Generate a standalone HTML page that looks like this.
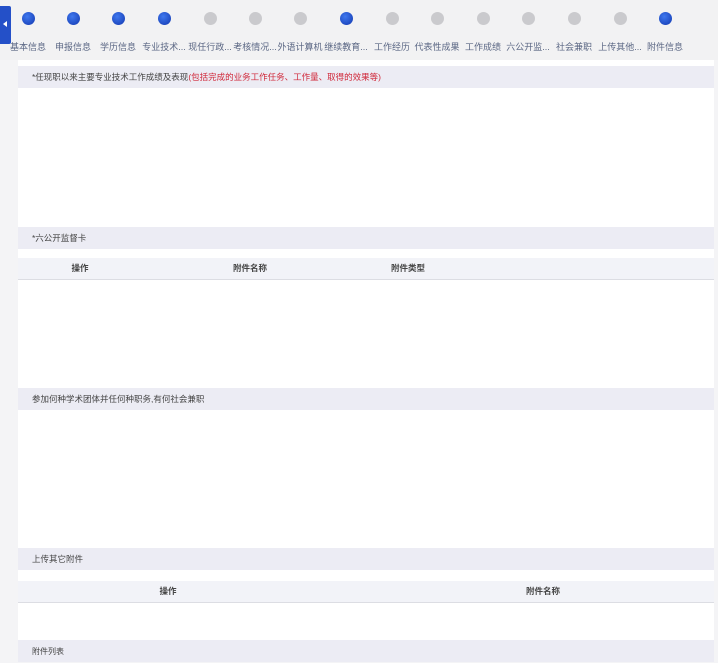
<!DOCTYPE html>
<html><head><meta charset="utf-8"><style>
body{margin:0;width:718px;height:653px;overflow:hidden;background:#f4f4f6;font-family:"Liberation Sans","Noto Sans CJK SC",sans-serif;position:relative}
.a{position:absolute}
.dot{position:absolute;top:12px;width:13px;height:13px;border-radius:50%}
.b{background:radial-gradient(circle at 40% 35%,#3f78ee,#1238b0)}
.g{background:#cacacd}
.lb{position:absolute;top:40px;font-size:9px;color:#5b6784;white-space:nowrap;transform:translateX(-50%)}
.panel{position:absolute;left:18px;top:60px;width:696px;height:593px;background:#fff}
.hd{position:absolute;left:18px;width:696px;height:22px;background:#ececf4;font-size:8.5px;color:#444;line-height:22px}
.hd span{padding-left:14px}
.th{position:absolute;left:18px;width:696px;height:21px;background:#f2f3f8;border-bottom:1px solid #dcdde3;font-size:8.5px;color:#444;font-weight:bold;line-height:21px}
.th i{position:absolute;font-style:normal;transform:translateX(-50%)}
</style></head><body>
<div class="a" style="left:0;top:0;width:718px;height:60px;background:#f2f2f3"></div>
<div class="a" style="left:0;top:6px;width:11px;height:38px;background:#2450c8;border-radius:0 2px 2px 0"></div>
<div class="a" style="left:3px;top:21px;width:0;height:0;border-right:4px solid #fff;border-top:3px solid transparent;border-bottom:3px solid transparent"></div>
<div class="dot b" style="left:22px"></div><div class="lb" style="left:28px">基本信息</div>
<div class="dot b" style="left:67px"></div><div class="lb" style="left:73px">申报信息</div>
<div class="dot b" style="left:112px"></div><div class="lb" style="left:118px">学历信息</div>
<div class="dot b" style="left:158px"></div><div class="lb" style="left:164px">专业技术...</div>
<div class="dot g" style="left:204px"></div><div class="lb" style="left:210px">现任行政...</div>
<div class="dot g" style="left:249px"></div><div class="lb" style="left:255px">考核情况...</div>
<div class="dot g" style="left:294px"></div><div class="lb" style="left:300px">外语计算机</div>
<div class="dot b" style="left:340px"></div><div class="lb" style="left:346px">继续教育...</div>
<div class="dot g" style="left:386px"></div><div class="lb" style="left:392px">工作经历</div>
<div class="dot g" style="left:431px"></div><div class="lb" style="left:437px">代表性成果</div>
<div class="dot g" style="left:477px"></div><div class="lb" style="left:483px">工作成绩</div>
<div class="dot g" style="left:522px"></div><div class="lb" style="left:528px">六公开监...</div>
<div class="dot g" style="left:568px"></div><div class="lb" style="left:574px">社会兼职</div>
<div class="dot g" style="left:614px"></div><div class="lb" style="left:620px">上传其他...</div>
<div class="dot b" style="left:659px"></div><div class="lb" style="left:665px">附件信息</div>
<div class="panel"></div>
<div class="hd" style="top:66px"><span>*任现职以来主要专业技术工作成绩及表现<span style="color:#d0283a;padding:0">(包括完成的业务工作任务、工作量、取得的效果等)</span></span></div>
<div class="hd" style="top:227px"><span>*六公开监督卡</span></div>
<div class="th" style="top:258px"><i style="left:62px">操作</i><i style="left:232px">附件名称</i><i style="left:390px">附件类型</i></div>
<div class="hd" style="top:388px"><span>参加何种学术团体并任何种职务,有何社会兼职</span></div>
<div class="hd" style="top:548px"><span>上传其它附件</span></div>
<div class="th" style="top:581px"><i style="left:150px">操作</i><i style="left:525px">附件名称</i></div>
<div class="hd" style="top:640px"><span style="font-size:8px">附件列表</span></div>
</body></html>
